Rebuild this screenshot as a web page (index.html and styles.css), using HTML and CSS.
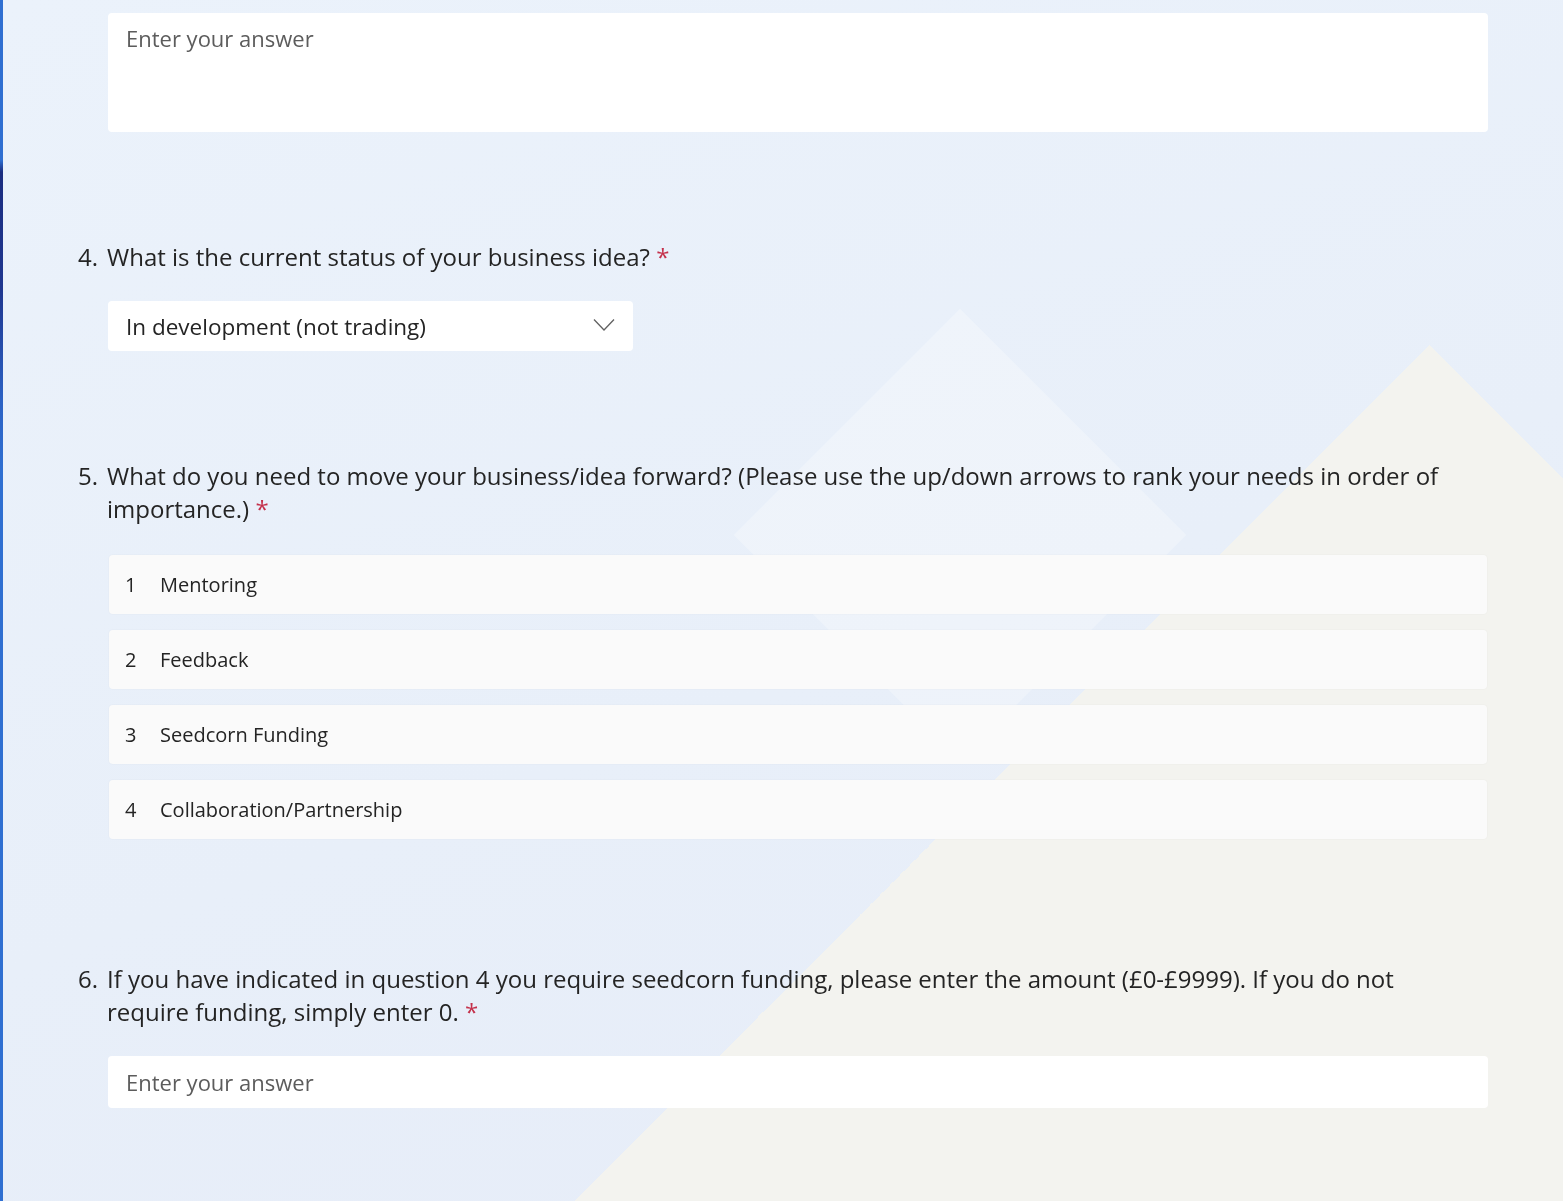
FILE: index.html
```html
<!DOCTYPE html>
<html lang="en">
<head>
<meta charset="utf-8"/>
<title>Business idea form</title>
<meta name="viewport" content="width=device-width">
<link rel="stylesheet" href="styles.css">
</head>
<body>
<div class="backdrop" aria-hidden="true">
	<div class="diamond"></div>
</div>
<form class="form" autocomplete="off">
	<div class="answer answer-long">Enter your answer</div>

	<div class="question">
		<span class="num">4.</span>
		<span class="title">What is the current status of your business idea? <span class="req">*</span></span>
	</div>
	<div class="answer dropdown">
		<span>In development (not trading)</span>
		<svg width="22" height="14" viewBox="0 0 22 14"><polyline points="1,1.5 11,12 21,1.5" fill="none" stroke="#616161" stroke-width="1.3"/></svg>
	</div>

	<div class="question">
		<span class="num">5.</span>
		<span class="title">What do you need to move your business/idea forward? (Please use the up/down arrows to rank your needs in order of importance.) <span class="req">*</span></span>
	</div>
	<ol class="rank">
		<li><span class="pos">1</span>Mentoring</li>
		<li><span class="pos">2</span>Feedback</li>
		<li><span class="pos">3</span>Seedcorn Funding</li>
		<li><span class="pos">4</span>Collaboration/Partnership</li>
	</ol>

	<div class="question">
		<span class="num">6.</span>
		<span class="title">If you have indicated in question 4 you require seedcorn funding, please enter the amount (£0-£9999). If you do not require funding, simply enter 0. <span class="req">*</span></span>
	</div>
	<div class="answer answer-short">Enter your answer</div>
</form>
</body>
</html>
```

FILE: styles.css
```css
html {
	overflow:hidden;
}
body {
	margin:0;
	min-height:100vh;
	color:#242424;
	font:400 24px/33px "Open Sans", "Noto Sans", sans-serif;
	background:
		linear-gradient(to bottom, #2f6fd1 0, #2f6fd1 160px, #1b2d80 172px, #1f3790 290px, #2c62c4 400px, #2f6fd1 470px) 0 0 / 3px 100% no-repeat,
		conic-gradient(from 135deg at 1430px 345px, #f3f3ef 0deg 90deg, transparent 90deg),
		linear-gradient(160deg, #ebf2fb 0%, #e8eff9 55%, #e6ecf8 100%);
}
.backdrop {
	position:fixed;
	inset:0;
	z-index:-1;
	overflow:hidden;
}
.diamond {
	position:absolute;
	left:800px;
	top:375px;
	width:320px;
	height:320px;
	transform:rotate(45deg);
	background:rgba(255,255,255,.28);
}
.form {
	padding:13px 75px 0 78px;
}
.answer {
	margin-left:30px;
	background:#fff;
	border-radius:4px;
	box-sizing:border-box;
	font-size:22px;
	color:#5c5c5c;
}
.answer-long {
	height:119px;
	padding:10px 18px;
	line-height:30px;
}
.answer-short {
	height:52px;
	margin-top:28px;
	padding:11px 18px;
	line-height:30px;
}
.question {
	display:grid;
	grid-template-columns:29px 1fr;
	margin-top:108px;
}
.title {
	padding-right:10px;
}
.req {
	color:#c4314b;
}
.dropdown {
	width:525px;
	height:50px;
	margin-top:28px;
	padding:0 18px;
	display:flex;
	align-items:center;
	justify-content:space-between;
	color:#242424;
	font-size:22.5px;
}
.dropdown svg {
	margin-top:-2px;
}
.rank {
	list-style:none;
	display:grid;
	gap:16px;
	margin:30px 1px 0 31px;
	padding:0 0 15px;
}
.rank li {
	height:59px;
	display:flex;
	align-items:center;
	padding:0 16px;
	background:#fafafa;
	border-radius:4px;
	box-shadow:0 0 2px rgba(0,0,0,.05);
	font-size:20px;
}
.rank .pos {
	width:35px;
}
```
